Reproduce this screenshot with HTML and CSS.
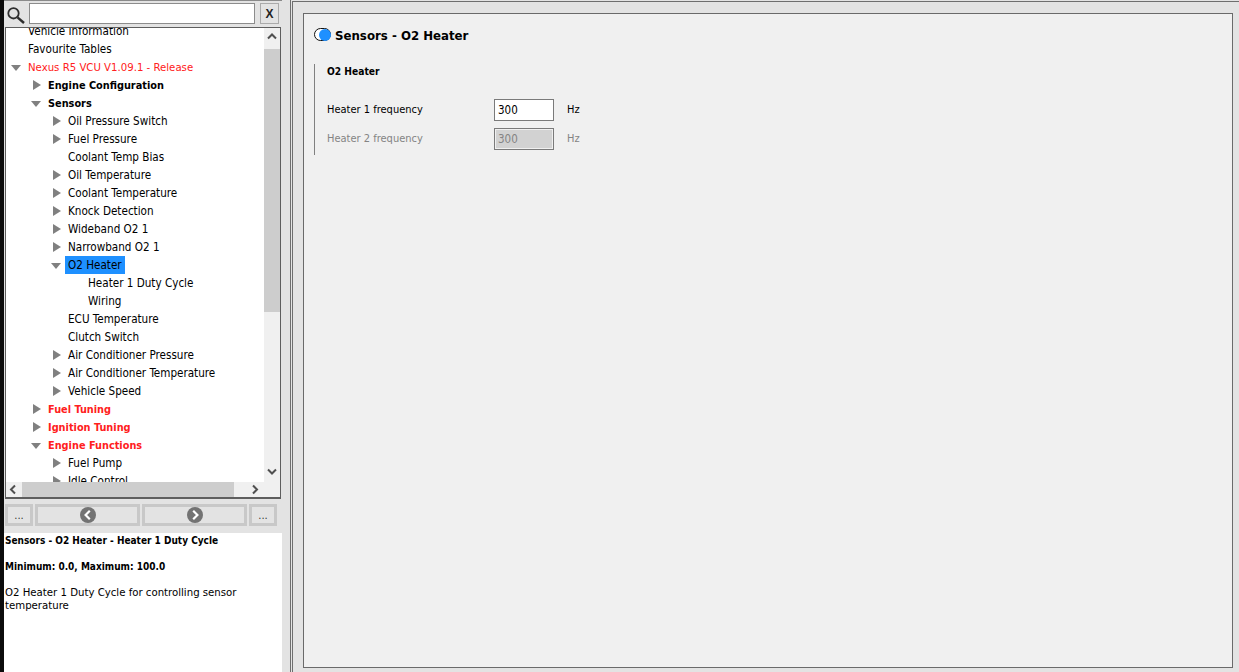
FILE: index.html
```html
<!DOCTYPE html>
<html lang="en">
<head>
<meta charset="utf-8">
<title>Sensors - O2 Heater</title>
<link rel="stylesheet" href="styles.css">
</head>
<body>
<div class="app">
  <aside class="sidebar">
    <div class="search">
      <svg class="search-icon" width="20" height="20" viewBox="0 0 20 20"><circle cx="7.5" cy="8.3" r="5.2" fill="none" stroke="#2e2e2e" stroke-width="1.8"/><path d="M11.5 12.3 18 18" stroke="#2e2e2e" stroke-width="2.4" fill="none"/></svg>
      <div class="search-input"></div>
      <div class="search-x">X</div>
    </div>
    <div class="tree-box">
      <div class="tree-top">
        <div class="tree">
          <ul class="rows">
            <li class="row l1"><span class="twist"></span><span class="txt">Vehicle Information</span></li>
            <li class="row l1"><span class="twist"></span><span class="txt">Favourite Tables</span></li>
            <li class="row l1"><span class="twist"><i class="tri-d"></i></span><span class="txt red caps">Nexus R5 VCU V1.09.1 - Release</span></li>
            <li class="row l2"><span class="twist"><i class="tri-r"></i></span><span class="txt bold">Engine Configuration</span></li>
            <li class="row l2"><span class="twist"><i class="tri-d"></i></span><span class="txt bold">Sensors</span></li>
            <li class="row l3"><span class="twist"><i class="tri-r"></i></span><span class="txt">Oil Pressure Switch</span></li>
            <li class="row l3"><span class="twist"><i class="tri-r"></i></span><span class="txt">Fuel Pressure</span></li>
            <li class="row l3"><span class="twist"></span><span class="txt">Coolant Temp Bias</span></li>
            <li class="row l3"><span class="twist"><i class="tri-r"></i></span><span class="txt">Oil Temperature</span></li>
            <li class="row l3"><span class="twist"><i class="tri-r"></i></span><span class="txt">Coolant Temperature</span></li>
            <li class="row l3"><span class="twist"><i class="tri-r"></i></span><span class="txt">Knock Detection</span></li>
            <li class="row l3"><span class="twist"><i class="tri-r"></i></span><span class="txt">Wideband O2 1</span></li>
            <li class="row l3"><span class="twist"><i class="tri-r"></i></span><span class="txt">Narrowband O2 1</span></li>
            <li class="row l3"><span class="twist"><i class="tri-d"></i></span><span class="txt sel">O2 Heater</span></li>
            <li class="row l4"><span class="twist"></span><span class="txt">Heater 1 Duty Cycle</span></li>
            <li class="row l4"><span class="twist"></span><span class="txt">Wiring</span></li>
            <li class="row l3"><span class="twist"></span><span class="txt">ECU Temperature</span></li>
            <li class="row l3"><span class="twist"></span><span class="txt">Clutch Switch</span></li>
            <li class="row l3"><span class="twist"><i class="tri-r"></i></span><span class="txt">Air Conditioner Pressure</span></li>
            <li class="row l3"><span class="twist"><i class="tri-r"></i></span><span class="txt">Air Conditioner Temperature</span></li>
            <li class="row l3"><span class="twist"><i class="tri-r"></i></span><span class="txt">Vehicle Speed</span></li>
            <li class="row l2"><span class="twist"><i class="tri-r"></i></span><span class="txt bold red">Fuel Tuning</span></li>
            <li class="row l2"><span class="twist"><i class="tri-r"></i></span><span class="txt bold red">Ignition Tuning</span></li>
            <li class="row l2"><span class="twist"><i class="tri-d"></i></span><span class="txt bold red">Engine Functions</span></li>
            <li class="row l3"><span class="twist"><i class="tri-r"></i></span><span class="txt">Fuel Pump</span></li>
            <li class="row l3"><span class="twist"><i class="tri-r"></i></span><span class="txt">Idle Control</span></li>
          </ul>
        </div>
        <div class="vscroll">
          <svg class="arrow" width="16" height="21" viewBox="0 0 16 21"><path d="M4 10.5 8 6.5 12 10.5" fill="none" stroke="#505050" stroke-width="2"/></svg>
          <div class="vthumb"></div>
          <svg class="arrow-end" width="16" height="21" viewBox="0 0 16 21"><path d="M4 8.5 8 12.5 12 8.5" fill="none" stroke="#505050" stroke-width="2"/></svg>
        </div>
      </div>
      <div class="hscroll">
        <svg width="16" height="15" viewBox="0 0 16 15"><path d="M9 3.5 5 7.5 9 11.5" fill="none" stroke="#505050" stroke-width="2"/></svg>
        <div class="hthumb"></div>
        <svg class="arrow-right" width="16" height="15" viewBox="0 0 16 15"><path d="M6 3.5 10 7.5 6 11.5" fill="none" stroke="#505050" stroke-width="2"/></svg>
      </div>
    </div>
    <div class="nav">
      <div class="btn small">...</div>
      <div class="btn wide"><svg width="16" height="16" viewBox="0 0 16 16"><circle cx="8" cy="8" r="8" fill="#737373"/><path d="M9.8 3.8 5.6 8l4.2 4.2" fill="none" stroke="#fff" stroke-width="2.2"/></svg></div>
      <div class="btn wide"><svg width="16" height="16" viewBox="0 0 16 16"><circle cx="8" cy="8" r="8" fill="#737373"/><path d="M6.2 3.8 10.4 8l-4.2 4.2" fill="none" stroke="#fff" stroke-width="2.2"/></svg></div>
      <div class="btn small">...</div>
    </div>
    <div class="desc">
      <p class="bold">Sensors - O2 Heater - Heater 1 Duty Cycle</p>
      <p class="bold">Minimum: 0.0, Maximum: 100.0</p>
      <p>O2 Heater 1 Duty Cycle for controlling sensor temperature</p>
    </div>
  </aside>
  <div class="splitter"></div>
  <main class="outer">
    <section class="panel">
      <header class="title">
        <span class="pill"><span class="dot"></span></span>
        <h1>Sensors - O2 Heater</h1>
      </header>
      <div class="group">
        <h2>O2 Heater</h2>
        <div class="field">
          <label>Heater 1 frequency</label>
          <div class="value">300</div>
          <span class="unit">Hz</span>
        </div>
        <div class="field disabled">
          <label>Heater 2 frequency</label>
          <div class="value">300</div>
          <span class="unit">Hz</span>
        </div>
      </div>
    </section>
  </main>
</div>
</body>
</html>
```
FILE: styles.css
```css
* { box-sizing: border-box; }
html, body { margin: 0; height: 100%; overflow: hidden; }
body { background: #e3e3e3; font-family: "DejaVu Sans", sans-serif; font-stretch: condensed; font-size: 11.6px; color: #000; }
.app { display: flex; height: 672px; }

.sidebar { width: 282px; flex: none; display: flex; flex-direction: column; border-left: 4px solid #0c0c0c; background: #e3e3e3; }
.search { height: 27px; flex: none; display: flex; align-items: flex-start; padding-top: 2px; border-top: 1px solid #8a8a8a; }
.search-icon { margin: 2px 0 0 2px; flex: none; }
.search-input { width: 226px; height: 21px; margin-left: 3px; background: #fff; border: 1px solid #8c8c8c; }
.search-x { width: 19px; height: 21px; margin-left: 5px; border: 1px solid #aaa; display: flex; align-items: center; justify-content: center; font: bold 12px "Liberation Sans", sans-serif; color: #222; }

.tree-box { width: 276px; height: 472px; flex: none; margin-left: 1px; border: 1px solid #5e5e5e; border-bottom-width: 2px; display: flex; flex-direction: column; background: #f0f0f0; }
.tree-top { flex: 1; min-height: 0; display: flex; }
.tree { flex: 1; min-width: 0; overflow: hidden; background: #fff; }
.rows { list-style: none; margin: -6px 0 0; padding: 0; }
.row { height: 18px; display: flex; align-items: center; white-space: nowrap; }
.l1 { padding-left: 0; }
.l2 { padding-left: 20px; }
.l3 { padding-left: 40px; }
.l4 { padding-left: 60px; }
.twist { width: 19px; height: 18px; flex: none; display: flex; align-items: center; justify-content: flex-end; padding-right: 4px; }
.tri-r { display: block; width: 0; height: 0; border-left: 8px solid #808080; border-top: 5.5px solid transparent; border-bottom: 5.5px solid transparent; }
.tri-d { display: block; width: 0; height: 0; margin-top: 2px; border-top: 6px solid #808080; border-left: 5.5px solid transparent; border-right: 5.5px solid transparent; }
.txt { height: 18px; line-height: 18px; padding: 0 4px 0 3px; }
.txt.bold { font-size: 10.85px; line-height: 20px; }
.caps { font-size: 11.3px; line-height: 20px; }
.red { color: #ff2020; }
.bold { font-weight: 700; }
.sel { background: #1e90ff; padding-right: 3px; }

.vscroll { width: 16px; flex: none; display: flex; flex-direction: column; background: #f0f0f0; }
.vthumb { height: 263px; background: #cdcdcd; }
.arrow-end { margin-top: auto; }
.hscroll { height: 15px; flex: none; display: flex; background: #f0f0f0; }
.hthumb { width: 212px; height: 15px; background: #cdcdcd; }
.arrow-right { margin-left: 13px; }

.nav { display: flex; gap: 2px; margin: 5px 0 0 1px; flex: none; }
.btn { height: 22px; border: 3px solid #c8c8c8; background: #e3e3e3; display: flex; align-items: center; justify-content: center; }
.small { width: 28px; font-size: 11px; color: #333; }
.wide { width: 105px; }

.desc { flex: 1; margin-top: 7px; background: #fff; padding: 1px 1px 0; font-size: 11.3px; line-height: 13px; }
.desc p { margin: 0 0 13px; }
.desc .bold { font-size: 10px; }

.splitter { width: 9px; flex: none; border-right: 1px solid #6e6e6e; }
.outer { flex: 1; margin: 1px 0 0 1px; border-top: 1px solid #6e6e6e; border-left: 1px solid #6e6e6e; padding: 1px 0 0 2px; background: #e3e3e3; }
.panel { width: 930px; height: 655px; margin: 10px 0 0 8px; border: 1px solid #6a6a6a; background: #f0f0f0; padding: 12px 10px; }
.title { display: flex; align-items: center; gap: 4px; height: 18px; }
.pill { width: 17px; height: 13px; margin-top: -1px; border-radius: 6.5px; border: 1px solid #111; background: #fff; display: flex; justify-content: flex-end; align-items: center; flex: none; }
.dot { width: 12px; height: 12px; border-radius: 50%; background: #1e90ff; margin-right: -1px; }
.title h1 { margin: 2px 0 0; font-size: 13.1px; font-weight: 700; line-height: 18px; }
.group { margin-top: 20px; height: 91px; border-left: 1px solid #808080; padding-left: 12px; }
.group h2 { margin: 0; height: 14px; font-size: 10.2px; font-weight: 700; line-height: 16px; }
.field { display: flex; align-items: center; height: 22px; margin-bottom: 7px; font-size: 11px; }
.group h2 + .field { margin-top: 21px; }
.field label { width: 167px; flex: none; margin-bottom: 2px; }
.value { width: 60px; height: 22px; border: 1px solid #7a7a7a; background: #fff; padding-left: 3px; line-height: 21px; font-size: 11.5px; flex: none; }
.unit { margin-left: 13px; margin-bottom: 2px; }
.disabled { color: #848484; }
.disabled .value { background: #d2d2d2; box-shadow: inset 0 0 0 1px #f0f0f0; }
```
